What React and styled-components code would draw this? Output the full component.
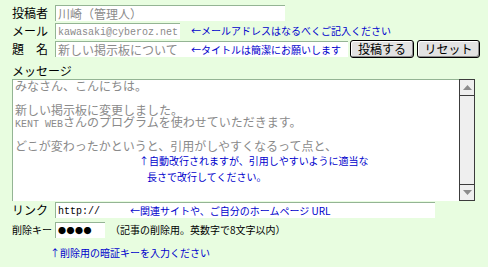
import React from "react";
import styled, { createGlobalStyle } from "styled-components";

const GlobalStyle = createGlobalStyle`
  html, body {
    margin: 0;
    padding: 0;
    background: #e8fde0;
  }
  body {
    font-family: "Noto Sans CJK JP", "DejaVu Sans", sans-serif;
    font-size: 12px;
    color: #000;
  }
`;

const Form = styled.div`
  display: flex;
  flex-direction: column;
  width: 476px;
  height: 267px;
  padding: 4px 0 0 12px;
  box-sizing: border-box;
`;

const Row = styled.div`
  display: flex;
  align-items: center;
  height: 18px;
  margin-top: ${(p) => p.$mt || 0}px;
`;

const Label = styled.span`
  width: 43px;
  flex: none;
  font-size: ${(p) => p.$size || 12}px;
  line-height: 14px;
  white-space: nowrap;
`;

const Field = styled.div`
  display: flex;
  align-items: center;
  width: ${(p) => p.$w}px;
  height: 16px;
  box-sizing: border-box;
  flex: none;
  padding-left: 2px;
  background: #fff;
  border-top: 1px solid #94b494;
  border-left: 1px solid #94b494;
  white-space: nowrap;
`;

const Value = styled.span`
  display: inline-block;
  width: ${(p) => (p.$w ? `${p.$w}px` : "auto")};
  flex: none;
  color: ${(p) => (p.$dark ? "#000" : "#8a8a8a")};
  font-size: 12px;
  line-height: 14px;
`;

const Mono = styled.span`
  font-family: "Liberation Mono", "DejaVu Sans Mono", monospace;
  font-size: 10px;
`;

const Dots = styled.span`
  font-size: 8px;
  letter-spacing: 0.5px;
  color: #000;
`;

const Hint = styled.span`
  color: #0000cc;
  font-size: 10px;
  line-height: 12px;
  white-space: nowrap;
  margin-left: ${(p) => p.$ml || 0}px;
`;

const Note = styled.span`
  font-size: 10px;
  line-height: 12px;
  margin-left: 5px;
  white-space: nowrap;
`;

const Buttons = styled.div`
  display: flex;
  gap: 3px;
  margin-left: 2px;
`;

const Button = styled.button`
  width: ${(p) => p.$w}px;
  height: 18px;
  padding: 0;
  font-family: inherit;
  font-size: 12px;
  line-height: 14px;
  color: #000;
  background: #e2e2e2;
  border: 1px solid #000;
  border-radius: 3px;
  box-shadow: inset 1px 1px #fff, inset -1px -1px #8c8c8c;
`;

const Caption = styled.div`
  height: 21px;
  padding-top: 5px;
  box-sizing: border-box;
  line-height: 15px;
`;

const MessageBox = styled.div`
  display: flex;
  height: 122px;
`;

const TextArea = styled.div`
  width: 447px;
  box-sizing: border-box;
  padding: 0 0 0 2px;
  background: #fff;
  border-top: 1px solid #94b494;
  border-left: 1px solid #94b494;
  color: #8a8a8a;
  font-size: 12px;
  line-height: 12px;
  white-space: nowrap;
`;

const Line = styled.div`
  height: 12px;
`;

const BlueNote = styled.div`
  color: #0000cc;
  font-size: 10px;
  line-height: 16px;
  margin-top: 1px;
  padding-left: ${(p) => p.$indent}px;
`;

const Indented = styled.span`
  padding-left: 8px;
`;

const ScrollBar = styled.div`
  display: flex;
  flex-direction: column;
  justify-content: space-between;
  width: 16px;
  box-sizing: border-box;
  border: 1px solid #3c3c3c;
  background: #efefef;
`;

const Arrow = styled.div`
  display: flex;
  align-items: center;
  justify-content: center;
  height: 16px;
  box-sizing: border-box;
  border-top: ${(p) => (p.$down ? "1px solid #3c3c3c" : "none")};
  border-bottom: ${(p) => (p.$down ? "none" : "1px solid #3c3c3c")};
`;

const BottomHint = styled.div`
  margin: 8px 0 0 38px;
  color: #0000cc;
  font-size: 10px;
  line-height: 12px;
`;

function Triangle({ down }) {
  return (
    <svg width="9" height="5" viewBox="0 0 9 5">
      <polygon
        points={down ? "0,0 9,0 4.5,5" : "0,5 9,5 4.5,0"}
        fill="#8c8c8c"
      />
    </svg>
  );
}

export default function App() {
  return (
    <>
      <GlobalStyle />
      <Form>
        <Row>
          <Label>投稿者</Label>
          <Field $w={230}>
            <Value>川崎（管理人）</Value>
          </Field>
        </Row>
        <Row>
          <Label>メール</Label>
          <Field $w={125}>
            <Value>
              <Mono>kawasaki@cyberoz.net</Mono>
            </Value>
          </Field>
          <Hint $ml={11}>←メールアドレスはなるべくご記入ください</Hint>
        </Row>
        <Row>
          <Label>題　名</Label>
          <Field $w={293}>
            <Value $w={133}>新しい掲示板について</Value>
            <Hint>←タイトルは簡潔にお願いします</Hint>
          </Field>
          <Buttons>
            <Button $w={64}>投稿する</Button>
            <Button $w={63}>リセット</Button>
          </Buttons>
        </Row>
        <Caption>メッセージ</Caption>
        <MessageBox>
          <TextArea>
            <Line>みなさん、こんにちは。</Line>
            <Line />
            <Line>新しい掲示板に変更しました。</Line>
            <Line>
              <Mono>KENT WEB</Mono>さんのプログラムを使わせていただきます。
            </Line>
            <Line />
            <Line>どこが変わったかというと、引用がしやすくなるって点と、</Line>
            <BlueNote $indent={124}>
              ↑自動改行されますが、引用しやすいように適当な
              <br />
              <Indented>長さで改行してください。</Indented>
            </BlueNote>
          </TextArea>
          <ScrollBar>
            <Arrow>
              <Triangle />
            </Arrow>
            <Arrow $down>
              <Triangle down />
            </Arrow>
          </ScrollBar>
        </MessageBox>
        <Row>
          <Label>リンク</Label>
          <Field $w={380}>
            <Value $w={72} $dark>
              <Mono>http://</Mono>
            </Value>
            <Hint>←関連サイトや、ご自分のホームページ URL</Hint>
          </Field>
        </Row>
        <Row $mt={2}>
          <Label $size={10}>削除キー</Label>
          <Field $w={50}>
            <Dots>●●●●</Dots>
          </Field>
          <Note>（記事の削除用。英数字で8文字以内）</Note>
        </Row>
        <BottomHint>↑削除用の暗証キーを入力ください</BottomHint>
      </Form>
    </>
  );
}
